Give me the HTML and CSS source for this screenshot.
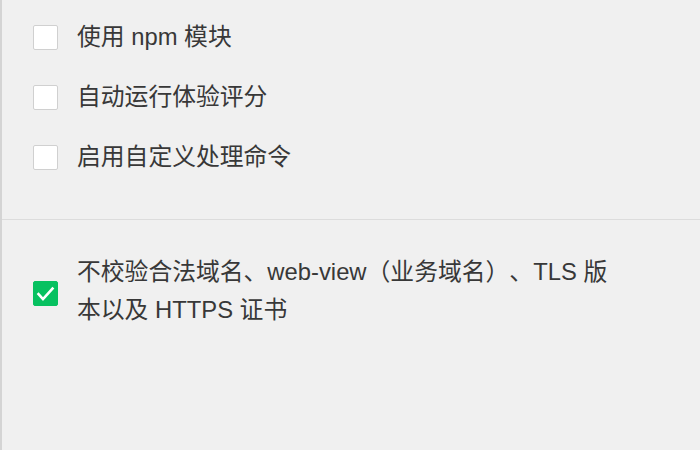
FILE: index.html
```html
<!DOCTYPE html>
<html lang="zh-CN">
<head>
<meta charset="utf-8">
<title>设置</title>
<link rel="stylesheet" href="styles.css">
</head>
<body>
<div class="panel">
  <div class="section section-top">
    <label class="row">
      <span class="box"></span>
      <span class="label">使用 npm 模块</span>
    </label>
    <label class="row">
      <span class="box"></span>
      <span class="label">自动运行体验评分</span>
    </label>
    <label class="row">
      <span class="box"></span>
      <span class="label">启用自定义处理命令</span>
    </label>
  </div>
  <div class="section section-bottom">
    <label class="row row-multi">
      <span class="box box-checked">
        <svg width="25" height="25" viewBox="0 0 25 25"><polyline points="5.5,13 10,18 19.5,7.5" fill="none" stroke="#fff" stroke-width="2.6" stroke-linecap="square" stroke-linejoin="miter"/></svg>
      </span>
      <span class="label label-multi">不校验合法域名、web-view（业务域名）、TLS 版本以及 HTTPS 证书</span>
    </label>
  </div>
</div>
</body>
</html>
```
FILE: styles.css
```css
html, body {
  margin: 0;
  padding: 0;
}
body {
  width: 700px;
  height: 450px;
  background: #f0f0f0;
  font-family: "Liberation Sans", "Noto Sans CJK SC", sans-serif;
  font-size: 23.8px;
  color: #383838;
  overflow: hidden;
  text-spacing-trim: space-all;
}
.panel {
  box-sizing: border-box;
  height: 450px;
  border-left: 2px solid #d4d4d4;
}
.section-top {
  padding-top: 7px;
  padding-bottom: 32px;
  border-bottom: 1px solid #dcdcdc;
}
.section-bottom {
  padding-top: 33px;
}
.row {
  display: flex;
  align-items: center;
  height: 60px;
  padding-left: 31px;
  gap: 19px;
}
.row-multi {
  height: auto;
}
.box {
  box-sizing: border-box;
  flex: none;
  width: 25px;
  height: 25px;
  background: #fff;
  border: 1px solid #d0d0d0;
  border-radius: 2px;
}
.box-checked {
  position: relative;
  background: #07c160;
  border-color: #07c160;
  margin-top: 5px;
}
.box-checked svg {
  position: absolute;
  left: -1px;
  top: -1px;
}
.label {
  line-height: 30px;
}
.label-multi {
  line-height: 38px;
  max-width: 540px;
}
```
